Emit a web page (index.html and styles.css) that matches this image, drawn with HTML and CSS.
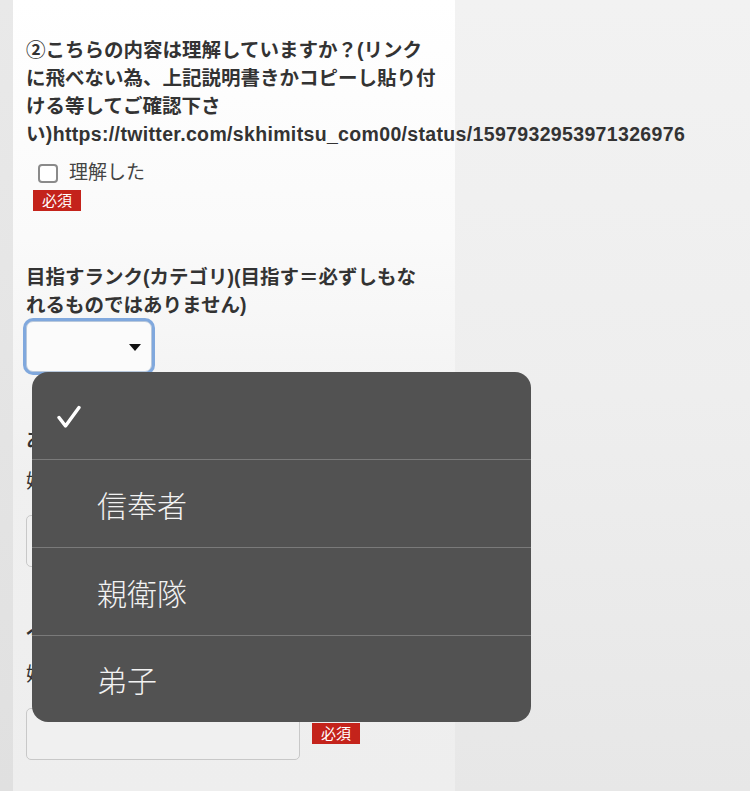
FILE: index.html
```html
<!DOCTYPE html>
<html lang="ja">
<head>
<meta charset="utf-8">
<title>フォーム</title>
<link rel="stylesheet" href="styles.css">
</head>
<body>
<div class="page">
  <div class="strip"></div>
  <main class="card">
    <section class="field">
      <div class="label">②こちらの内容は理解していますか？(リンク<br>に飛べない為、上記説明書きかコピーし貼り付<br>ける等してご確認下さ<br><span class="nowrap">い)https://twitter.com/skhimitsu_com00/status/1597932953971326976</span></div>
      <label class="check-row">
        <span class="checkbox"></span>
        <span class="check-text">理解した</span>
      </label>
      <span class="badge badge-check">必須</span>
    </section>

    <section class="field field-rank">
      <div class="label">目指すランク(カテゴリ)(目指す＝必ずしもな<br>れるものではありません)</div>
      <div class="select">
        <svg class="caret" width="12" height="8" viewBox="0 0 12 8"><path d="M0 0 H12 L6 7 Z" fill="#111"/></svg>
      </div>
    </section>

    <section class="field field-name">
      <div class="label">あなたのお名前</div>
      <div class="sub">姓</div>
      <div class="input-row">
        <div class="input"></div>
        <span class="badge">必須</span>
      </div>
    </section>

    <section class="field field-kana">
      <div class="label">ふりがな</div>
      <div class="sub">姓</div>
      <div class="input-row">
        <div class="input"></div>
        <span class="badge">必須</span>
      </div>
    </section>
  </main>
</div>

<div class="menu">
  <div class="menu-item">
    <svg class="tick" width="24" height="24" viewBox="0 0 24 24"><polyline points="2,12.5 8.5,21 22,2.5" fill="none" stroke="#fff" stroke-width="3.4" stroke-linecap="round" stroke-linejoin="round"/></svg>
  </div>
  <div class="menu-item"><span class="menu-text">信奉者</span></div>
  <div class="menu-item"><span class="menu-text">親衛隊</span></div>
  <div class="menu-item"><span class="menu-text">弟子</span></div>
</div>
</body>
</html>
```

FILE: styles.css
```css
html, body {
  margin: 0;
  padding: 0;
}

body {
  width: 750px;
  height: 791px;
  overflow: hidden;
  position: relative;
  background: linear-gradient(to bottom, #f2f2f2 0%, #eeeeee 50%, #e7e7e7 100%);
  font-family: "Liberation Sans", "Noto Sans CJK JP", sans-serif;
  color: #333;
}

.page {
  display: flex;
  height: 791px;
}

.strip {
  width: 13px;
  flex: none;
  background: linear-gradient(to bottom, #e9e9e9, #e0e0e0);
}

.card {
  width: 442px;
  flex: none;
  box-sizing: border-box;
  padding: 36px 0 0 13px;
  background: linear-gradient(to bottom, #ffffff 0%, #fafafa 30%, #f0f0f0 60%, #eeeeee 100%);
  overflow: visible;
}

.label {
  font-size: 19.5px;
  font-weight: bold;
  line-height: 28px;
  color: #333;
  white-space: nowrap;
}

.nowrap {
  white-space: nowrap;
  letter-spacing: 0.34px;
}

.check-row {
  display: flex;
  align-items: center;
  gap: 11px;
  height: 24px;
  margin: 13px 0 0 12px;
}

.checkbox {
  width: 16px;
  height: 15px;
  border: 2px solid #8a8a8a;
  border-radius: 4px;
  background: #fff;
}

.check-text {
  font-size: 19px;
  color: #444;
  line-height: 24px;
}

.badge {
  display: inline-block;
  background: #c4231b;
  color: #fff;
  font-size: 15px;
  line-height: 21px;
  height: 21px;
  padding: 0 9px;
}

.badge-check {
  margin: 5px 0 0 7px;
}

.field-rank {
  margin-top: 52px;
}

.select {
  position: relative;
  width: 126px;
  height: 51px;
  box-sizing: border-box;
  margin-top: 2px;
  border: 1px solid #b8c8dc;
  border-radius: 7px;
  background: #fbfbfb;
  box-shadow: 0 0 0 3px #80a8dd;
}

.caret {
  position: absolute;
  left: 102px;
  top: 22px;
}

.field-name {
  margin-top: 54px;
}

.sub {
  font-size: 19px;
  line-height: 28px;
  margin-top: 14px;
  color: #333;
}

.input-row {
  display: flex;
  align-items: flex-start;
  gap: 12px;
  margin-top: 19px;
}

.input {
  width: 274px;
  height: 52px;
  box-sizing: border-box;
  border: 1px solid #c8c8c8;
  border-radius: 5px;
  background: #f0f0f0;
}

.input-row .badge {
  margin-top: 15px;
}

.field-kana {
  margin-top: 47px;
}

.field-kana .sub {
  margin-top: 19px;
}

.menu {
  position: absolute;
  left: 32px;
  top: 372px;
  width: 499px;
  height: 350px;
  border-radius: 16px;
  background: #525252;
  overflow: hidden;
  display: flex;
  flex-direction: column;
}

.menu-item {
  height: 87px;
  flex: none;
  display: flex;
  align-items: center;
  padding-left: 65px;
  border-top: 1px solid #7a7a7a;
  position: relative;
}

.menu-item:first-child {
  border-top: none;
  padding-left: 25px;
}

.menu-item:last-child {
  height: 86px;
}

.tick {
  margin-top: 2px;
}

.menu-text {
  font-family: "Noto Sans CJK JP", sans-serif;
  font-size: 30px;
  font-weight: 300;
  color: #f2f2f2;
  line-height: 40px;
}
```
